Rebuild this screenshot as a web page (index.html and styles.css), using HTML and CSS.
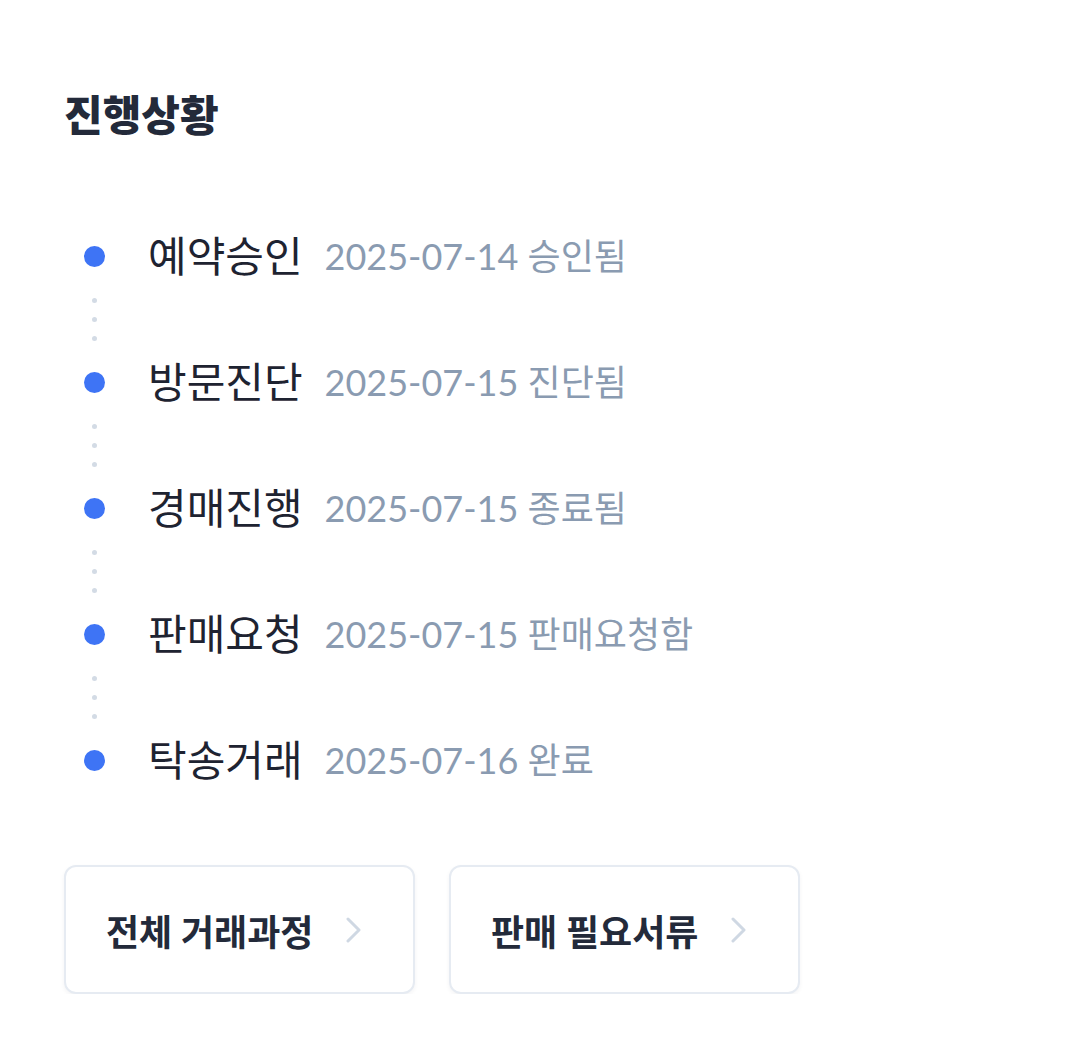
FILE: index.html
```html
<!DOCTYPE html>
<html lang="ko">
<head>
<meta charset="utf-8">
<link rel="stylesheet" href="styles.css">
</head>
<body>
<div class="page">
  <h2 class="title">진행상황</h2>
  <div class="timeline">
    <div class="item"><span class="dot"></span><span class="label">예약승인</span><span class="date">2025-07-14 승인됨</span></div>
    <div class="connector"><i></i><i></i><i></i></div>
    <div class="item"><span class="dot"></span><span class="label">방문진단</span><span class="date">2025-07-15 진단됨</span></div>
    <div class="connector"><i></i><i></i><i></i></div>
    <div class="item"><span class="dot"></span><span class="label">경매진행</span><span class="date">2025-07-15 종료됨</span></div>
    <div class="connector"><i></i><i></i><i></i></div>
    <div class="item"><span class="dot"></span><span class="label">판매요청</span><span class="date">2025-07-15 판매요청함</span></div>
    <div class="connector"><i></i><i></i><i></i></div>
    <div class="item"><span class="dot"></span><span class="label">탁송거래</span><span class="date">2025-07-16 완료</span></div>
  </div>
  <div class="buttons">
    <button class="btn"><span>전체 거래과정</span><svg class="chev" viewBox="0 0 16 26" width="16" height="26"><path d="M2 2 L13 13 L2 24" fill="none" stroke="#cfd8e3" stroke-width="3" stroke-linecap="round" stroke-linejoin="round"/></svg></button>
    <button class="btn"><span>판매 필요서류</span><svg class="chev" viewBox="0 0 16 26" width="16" height="26"><path d="M2 2 L13 13 L2 24" fill="none" stroke="#cfd8e3" stroke-width="3" stroke-linecap="round" stroke-linejoin="round"/></svg></button>
  </div>
</div>
</body>
</html>
```
FILE: styles.css
```css
html, body {
  margin: 0;
  padding: 0;
  background: #ffffff;
}
body {
  font-family: Lato, "Noto Sans CJK KR", sans-serif;
  color: #1f2533;
}
.page {
  padding: 88px 0 0 64px;
}
.title {
  margin: 0;
  font-size: 42px;
  font-weight: 900;
  line-height: 54px;
  color: #232a3a;
}
.timeline {
  margin-top: 89px;
  display: flex;
  flex-direction: column;
}
.item {
  height: 50px;
  display: flex;
  align-items: center;
}
.dot {
  width: 21px;
  height: 21px;
  border-radius: 50%;
  background: #3e74f5;
  margin-left: 20px;
  flex: none;
}
.label {
  margin-left: 43px;
  font-size: 42px;
  font-weight: 400;
  color: #1e2331;
  line-height: 50px;
}
.date {
  margin-left: 22px;
  font-size: 36px;
  color: #8a9bb1;
  line-height: 50px;
}
.connector {
  height: 76px;
  width: 5px;
  margin-left: 28px;
  display: flex;
  flex-direction: column;
  justify-content: center;
  gap: 14px;
}
.connector i {
  display: block;
  width: 5px;
  height: 5px;
  border-radius: 50%;
  background: #d3dbe5;
}
.buttons {
  margin-top: 80px;
  display: flex;
  gap: 34px;
}
.btn {
  width: 351px;
  height: 129px;
  box-sizing: border-box;
  border: 2px solid #e6ebf2;
  border-radius: 12px;
  background: #ffffff;
  box-shadow: 0 2px 4px rgba(30, 40, 60, 0.05);
  display: flex;
  align-items: center;
  padding: 0 0 0 40px;
  font-family: Lato, "Noto Sans CJK KR", sans-serif;
  font-size: 36px;
  font-weight: 700;
  color: #232a3a;
  cursor: pointer;
}
.chev {
  margin-left: 33px;
  flex: none;
}
```
